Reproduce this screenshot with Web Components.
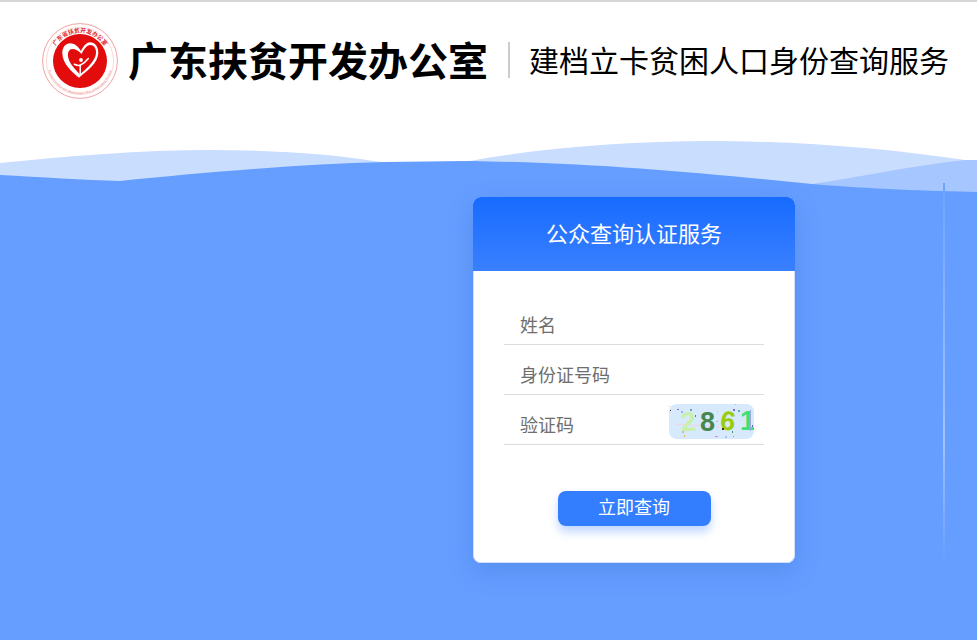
<!DOCTYPE html>
<html lang="zh-CN"><head><meta charset="utf-8"><title>建档立卡贫困人口身份查询服务</title>
<style>
html,body{margin:0;height:100%;background:#fff;}
body{font-family:"Noto Sans CJK SC","Liberation Sans",sans-serif;overflow:hidden;}
</style></head><body>
<query-page>
  <site-header slot="header" title-text="广东扶贫开发办公室" sub-text="建档立卡贫困人口身份查询服务"></site-header>
  <login-card heading="公众查询认证服务">
    <form-field label="姓名"></form-field>
    <form-field label="身份证号码"></form-field>
    <form-field label="验证码"><captcha-image slot="extra"></captcha-image></form-field>
    <submit-button slot="action">立即查询</submit-button>
  </login-card>
</query-page>
<script>
function def(name, html){
  customElements.define(name, class extends HTMLElement{
    constructor(){super();this.attachShadow({mode:'open'}).innerHTML=html;}
    connectedCallback(){
      this.shadowRoot.querySelectorAll('[data-attr]').forEach(n=>{n.textContent=this.getAttribute(n.dataset.attr)||''});
    }
  });
}
def('query-page',`<style>
:host{display:flex;flex-direction:column;width:977px;height:640px;box-sizing:border-box;overflow:hidden;border-top:2px solid #d6d6d6}
main{flex:1;position:relative;padding:73px 0 0 473px}
.bg{position:absolute;left:0;top:0;display:block}
.fg{position:relative}
</style>
<slot name="header"></slot>
<main>
<svg class="bg" width="977" height="516" viewBox="0 124 977 516">
<defs><linearGradient id="vl" x1="0" y1="0" x2="0" y2="1"><stop offset="0" stop-color="#6da3ff"/><stop offset=".07" stop-color="#72a8ff"/><stop offset=".68" stop-color="#a2c3ff"/><stop offset="1" stop-color="#a2c3ff" stop-opacity="0"/></linearGradient></defs>
<path d="M0 163C70 156 140 150 210 150C275 150 335 154 388 163L470 161C540 148 630 141 710 141C800 141 890 149 965 160L977 160V200H0Z" fill="#c9ddff"/>
<path d="M812 184C860 177 915 165 965 160L977 160V200H812Z" fill="#a6c6ff"/>
<path d="M0 175C40 177 85 180 120 181C200 173 300 164 385 162L470 161C600 163 700 173 812 184C870 189 930 191 977 192V640H0Z" fill="#659eff"/>
<rect x="943" y="183" width="2" height="380" fill="url(#vl)"/>
</svg>
<div class="fg"><slot></slot></div>
</main>`);
def('site-header',`<style>
:host{display:flex;align-items:center;height:122px;box-sizing:border-box;padding:0 0 4px 42px;background:#fff;color:#000}
svg{flex:none;display:block}
h1{margin:0 0 0 10px;padding-bottom:5px;font-size:40px;font-weight:700;line-height:48px;white-space:nowrap}
i{flex:none;width:2px;height:36px;background:#ccc;margin:0 19px 2px 20px}
span{font-size:30px;line-height:40px;padding-bottom:4px;white-space:nowrap}
</style>
<svg width="76" height="76" viewBox="0 0 76 76">
<defs><path id="ringTop" d="M9.500 38a28.500 28.500 0 0 1 57 0"/><path id="ringBot" d="M5 38a33 33 0 0 0 66 0"/></defs>
<circle cx="38" cy="38" r="37.400" fill="#fff" stroke="#e77" stroke-width=".7"/>
<circle cx="38" cy="38" r="33.600" fill="none" stroke="#f3b4b4" stroke-width=".5"/>
<text font-size="5.800" font-weight="700" fill="#e0272b" font-family="Noto Sans CJK SC,sans-serif"><textPath href="#ringTop" startOffset="50%" text-anchor="middle">广东省扶贫开发办公室</textPath></text>
<text font-size="2.800" fill="#e66" font-family="Liberation Sans,sans-serif"><textPath href="#ringBot" startOffset="50%" text-anchor="middle">Poverty Alleviation and Development Office of Guangdong Province</textPath></text>
<circle cx="38" cy="38" r="27" fill="#e30c0c"/>
<path fill-rule="evenodd" fill="#fff" d="M39 28C42 22 45 19.300 48 19.300C53 19.300 56.500 24 56.300 30C56 40 46 47 37 54.700C30 49 20.500 41 20.300 30C20.300 24 24 20.300 28 20.300C32 20.300 36 23 39 28ZM39.500 31C42 26 45 22 48 22C52 22 54.300 25.500 54 30C53.500 38 45 45 38 51.500C33 46 26.500 40 26 33C25.700 29 27.500 26 30 26C34 26 37 28 39.500 31Z"/>
<circle cx="39" cy="37" r="1.900" fill="#fff"/>
<path fill="none" stroke="#fff" stroke-width="1.500" stroke-linecap="round" d="M32.300 41.300C34.500 42.300 37 42.800 38.500 42C41 41 44 38.500 46.300 35.500M38.200 42.300V50.500"/>
</svg>
<h1 data-attr="title-text"></h1><i></i><span data-attr="sub-text"></span>`);
def('login-card',`<style>
:host{display:block;width:322px;height:366px;background:#fff;border-radius:8px;box-shadow:inset 0 0 0 1px rgba(190,210,245,.7),0 8px 24px rgba(50,100,200,.28);overflow:hidden}
h2{margin:0;height:74px;box-sizing:border-box;padding-bottom:4px;display:flex;align-items:center;justify-content:center;font-size:22px;font-weight:400;color:#fff;background:linear-gradient(#176bff,#3a80ff)}
.body{padding:24px 31px 0;display:flex;flex-direction:column}
.act{display:flex;justify-content:center;margin-top:46px}
</style>
<h2 data-attr="heading"></h2>
<div class="body"><slot></slot><div class="act"><slot name="action"></slot></div></div>`);
def('form-field',`<style>
:host{display:flex;align-items:center;justify-content:space-between;height:50px;box-sizing:border-box;padding:8px 0 0 16px;border-bottom:1px solid #dcdcdc;color:#6e6e6e;font-size:18px;width:260px}
span{line-height:24px;white-space:nowrap}
::slotted([slot=extra]){margin-right:10px}
</style><span data-attr="label"></span><slot name="extra"></slot>`);
def('captcha-image',`<style>
:host{display:block;width:85px;height:35px;margin-top:-4px;margin-right:-10px}
svg{display:block}
text{font:700 27px "Liberation Sans",sans-serif}
</style>
<svg width="85" height="35" viewBox="0 0 85 35">
<rect width="85" height="35" rx="8" fill="#d6e9fd"/>
<path d="M6 20L50 23" stroke="#f3d3e6" stroke-width="1"/>
<text x="12" y="27" fill="#c8f1a8" transform="rotate(-4 19 20)">2</text>
<text x="31" y="27" fill="#47864f">8</text>
<text x="51" y="26" fill="#9ccb0c" transform="rotate(8 58 20)">6</text>
<text x="71" y="26" fill="#3fe076">1</text>
<rect x="81" y="6" width="1" height="21" fill="#9ea8ef"/>
<g fill="#7b6fc0"><rect x="0" y="2" width="1" height="1" fill="#b4e26a"/><rect x="1" y="6" width="1" height="1" fill="#532"/><rect x="8" y="5" width="2" height="1"/><rect x="12" y="7" width="2" height="2" fill="#9bb5f0"/><rect x="21" y="5" width="2" height="2" fill="#6aa"/><rect x="26" y="11" width="1" height="2" fill="#679"/><rect x="48" y="7" width="1" height="1" fill="#bd6"/><rect x="47" y="17" width="2" height="1" fill="#bb9"/><rect x="64" y="5" width="2" height="2"/><rect x="69" y="6" width="2" height="2" fill="#6aa"/><rect x="66" y="0" width="1" height="1" fill="#daa"/><rect x="64" y="17" width="1" height="1" fill="#ecc"/><rect x="53" y="24" width="2" height="2" fill="#432"/><rect x="63" y="27" width="1" height="2" fill="#495"/><rect x="13" y="27" width="2" height="2" fill="#bbb"/><rect x="15" y="31" width="1" height="2" fill="#db5"/><rect x="46" y="32" width="3" height="1" fill="#e7c"/><rect x="56" y="32" width="2" height="2" fill="#bbe"/><rect x="64" y="32" width="1" height="1" fill="#99d"/><rect x="83" y="21" width="1" height="2" fill="#66b"/></g>
</svg>`);
def('submit-button',`<style>
:host{display:flex;align-items:center;justify-content:center;width:153px;height:35px;box-sizing:border-box;padding-bottom:5px;background:#337eff;color:#fff;border-radius:8px;font-size:18px;box-shadow:0 6px 10px rgba(51,126,255,.3);cursor:pointer}
</style><slot></slot>`);
</script>
</body></html>
